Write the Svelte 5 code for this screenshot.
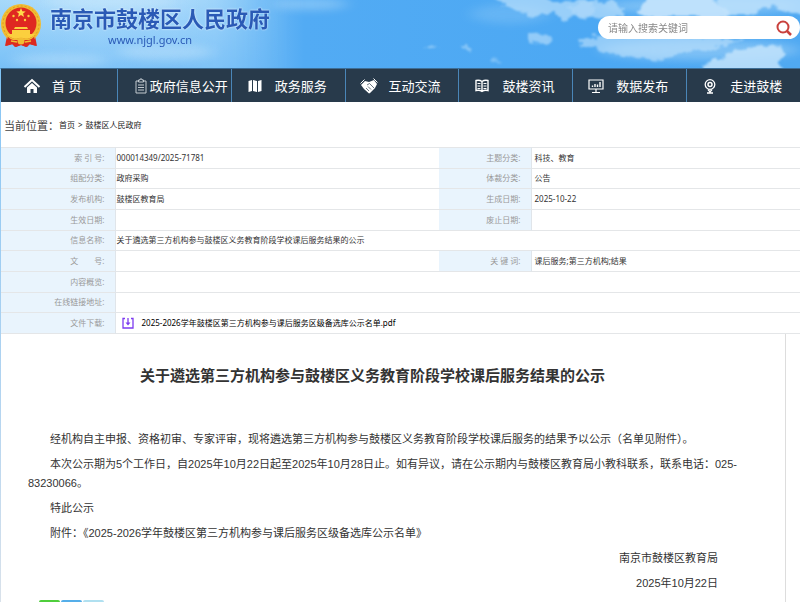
<script>
    let keyword = "";

    const navItems = [
        { icon: "home", label: "首 页" },
        { icon: "clipboard", label: "政府信息公开", wide: true },
        { icon: "map", label: "政务服务" },
        { icon: "hands", label: "互动交流" },
        { icon: "book", label: "鼓楼资讯" },
        { icon: "chart", label: "数据发布" },
        { icon: "pin", label: "走进鼓楼" }
    ];

    const title = "关于遴选第三方机构参与鼓楼区义务教育阶段学校课后服务结果的公示";

    // rows with two cells fill the whole width
    const rows = [
        ["索 引 号:", "000014349/2025-71781", "主题分类:", "科技、教育"],
        ["组配分类:", "政府采购", "体裁分类:", "公告"],
        ["发布机构:", "鼓楼区教育局", "生成日期:", "2025-10-22"],
        ["生效日期:", "", "废止日期:", ""],
        ["信息名称:", title],
        ["文　　号:", "", "关 键 词:", "课后服务;第三方机构;结果"],
        ["内容概览:", ""],
        ["在线链接地址:", ""]
    ];

    const paragraphs = [
        "经机构自主申报、资格初审、专家评审，现将遴选第三方机构参与鼓楼区义务教育阶段学校课后服务的结果予以公示（名单见附件）。",
        "本次公示期为5个工作日，自2025年10月22日起至2025年10月28日止。如有异议，请在公示期内与鼓楼区教育局小教科联系，联系电话：025-83230066。",
        "特此公示",
        "附件：《2025-2026学年鼓楼区第三方机构参与课后服务区级备选库公示名单》"
    ];
</script>

<div class="page" lang="zh-CN">
    <header>
        <svg class="sky" viewBox="0 0 800 68" preserveAspectRatio="none" aria-hidden="true">
            <defs>
                <linearGradient id="sky" x1="0" y1="0" x2="1" y2="0">
                    <stop offset="0" stop-color="#8accf9" />
                    <stop offset=".12" stop-color="#9bd4fa" />
                    <stop offset=".27" stop-color="#8ccbf9" />
                    <stop offset=".38" stop-color="#52abf4" />
                    <stop offset=".75" stop-color="#4ca8f3" />
                    <stop offset="1" stop-color="#50a9f2" />
                </linearGradient>
                <linearGradient id="low" x1="0" y1="0" x2="0" y2="1">
                    <stop offset="0" stop-color="#c4e6fd" stop-opacity=".5" />
                    <stop offset="1" stop-color="#66b5f6" stop-opacity=".5" />
                </linearGradient>
                <linearGradient id="fade" x1="0" y1="0" x2="1" y2="0">
                    <stop offset=".6" stop-color="#fff" />
                    <stop offset="1" stop-color="#000" />
                </linearGradient>
                <mask id="left"><rect width="290" height="68" fill="url(#fade)" /></mask>
                <filter id="soft" x="-30%" y="-60%" width="160%" height="220%"><feGaussianBlur stdDeviation="8 4" /></filter>
                <filter id="cloud" x="-10%" y="-20%" width="120%" height="140%" color-interpolation-filters="sRGB">
                    <feTurbulence type="fractalNoise" baseFrequency=".1 .15" numOctaves="3" seed="8" result="n" />
                    <feComponentTransfer in="n" result="opaque">
                        <feFuncA type="linear" slope="0" intercept="1" />
                    </feComponentTransfer>
                    <feDisplacementMap in="SourceGraphic" in2="opaque" scale="12" xChannelSelector="R" yChannelSelector="G" />
                    <feGaussianBlur stdDeviation="1.200" />
                </filter>
            </defs>
            <rect width="800" height="68" fill="url(#sky)" />
            <rect width="290" height="68" fill="url(#low)" mask="url(#left)" />
            <g fill="#d8effd" opacity=".35" filter="url(#soft)">
                <ellipse cx="110" cy="2" rx="65" ry="8" />
                <ellipse cx="165" cy="52" rx="48" ry="8" />
                <ellipse cx="310" cy="4" rx="38" ry="6" />
                <ellipse cx="60" cy="60" rx="48" ry="6" />
                <ellipse cx="510" cy="14" rx="40" ry="10" opacity=".5" />
                <ellipse cx="700" cy="50" rx="100" ry="10" />
                <ellipse cx="700" cy="6" rx="100" ry="8" />
            </g>
            <g fill="#c2e3fc" filter="url(#cloud)">
                <path d="M492-6h50l8 8 14 0 8-3h12l6 3 24-2 8 10v6l-34 2-14-3-8 6-12-8-26 2-14-5-12-5z" opacity=".65" />
                <path d="M568 4l18-1 12 6-6 7-20-2z" opacity=".35" />
                <path d="M645-8h65l8 14 12 6-6 6h-70l-18-4 8-6z" opacity=".95" />
                <path d="M715-8h91v24l-12-2-10-4-14-3-10 3-12 6h-20l-10-10z" opacity=".8" />
                <path d="M528 34l8-2 10 5 8 4-8 3-18-3z" opacity=".6" />
                <path d="M425 46l8 0 6 4-10 0zM461 45l6 0 6 7-9-2z" opacity=".5" />
                <path d="M576 40l20-4h100l48 4-34 9-26 3-20 8-32-2-24-5-14-4-18-4z" opacity=".6" />
                <path d="M692 74l14-10 18-6 6-6 22-4 8-4 20 2 5 6-5 10v12z" opacity=".85" />
                <path d="M490 60l10 1-4 3-8-1z" opacity=".4" />
            </g>
        </svg>

        <div class="brand">
            <svg class="emblem" viewBox="0 0 42 46" aria-hidden="true">
                <path d="M7 33 5 43l7-2 3 3 6-2 6 2 3-3 7 2-2-10z" fill="#dc2a20" />
                <circle cx="21" cy="21" r="20" fill="#f1bd33" />
                <circle cx="21" cy="21" r="18" fill="none" stroke="#dd9c1e" stroke-width="1" stroke-dasharray="2 2" />
                <circle cx="21" cy="20" r="15.500" fill="#df2821" />
                <path d="m21 5 1.300 3.200 3.400.2-2.600 2.200.9 3.300-3-1.900-3 1.900.9-3.300-2.600-2.200 3.400-.2z" fill="#ffdc4a" />
                <g fill="#fbcf3e">
                    <circle cx="13.500" cy="13" r="1.200" /><circle cx="28.500" cy="13" r="1.200" />
                    <circle cx="17" cy="17" r="1.200" /><circle cx="25" cy="17" r="1.200" />
                    <path d="M15 24h12l1 2H14zM12 27h18v4H12z" />
                    <path d="M7 31h28l-3 4H10z" />
                </g>
                <path d="M8 33 6 43l7-2 3 3 5-2 5 2 3-3 7 2-2-10-8 4H16z" fill="#dc2a20" />
                <path d="M8 33c5 5 8 3 13 3s8 2 13-3M11 38l6 1M31 38l-6 1" fill="none" stroke="#f1bd33" stroke-width="1.500" />
                <circle cx="21" cy="38" r="3.500" fill="#f1bd33" />
            </svg>
            <div class="name">
                <h1>南京市鼓楼区人民政府</h1>
                <a href="#home">www.njgl.gov.cn</a>
            </div>
        </div>

        <form class="search" on:submit|preventDefault>
            <input bind:value={keyword} type="text" placeholder="请输入搜索关键词" aria-label="搜索">
            <button aria-label="搜索">
                <svg viewBox="0 0 16 16" fill="none" stroke="#c9413d" stroke-width="2">
                    <circle cx="7" cy="7" r="5.500" />
                    <path d="m11 11 4 4" stroke-width="2.500" />
                </svg>
            </button>
        </form>
    </header>

    <nav>
        {#each navItems as item}
            <a href="#{item.icon}" class:wide={item.wide}>
                <svg viewBox="0 0 18 18" fill="none" stroke="#fff" aria-hidden="true">
                    {#if item.icon === "home"}
                        <path d="m1.500 10 7.500-7 7.500 7" stroke-width="2" />
                        <path d="M4 10.500 9 6l5 4.500V16h-3.500v-4h-3v4H4z" fill="#fff" stroke="none" />
                    {:else if item.icon === "clipboard"}
                        <path d="M6 4H4v12h10V4h-2" stroke="#c3cad0" />
                        <path d="M6.500 3H8V2h2v1h1.500v2h-5zM6 8h6M6 10.500h6M6 13h6" stroke="#c3cad0" />
                    {:else if item.icon === "map"}
                        <path d="M2.500 4 6 3v11l-3.500 1zM7 3l4 1v11l-4-1zM12 4l3.500-1v11L12 15z" fill="#fff" stroke="none" />
                    {:else if item.icon === "hands"}
                        <path d="m1 8 4-4 4 1 5-2 3 4-2 4-5 5-1 .5L4 12z" fill="#fff" stroke="none" />
                        <path d="m4.500 2.500-4 4M13.500 1.500l4 4" stroke-width="1" />
                        <path d="m7 8 2.500-1.500L14 11M6 11l3 3M8 9.500l3 3" stroke="#283a4b" stroke-width=".7" />
                    {:else if item.icon === "book"}
                        <path d="M9 4.500C7 3 5 3 3 3.500v10c2-.5 4-.5 6 .8 2-1.300 4-1.300 6-.8v-10c-2-.5-4-.5-6 1zV14" stroke-width="1.400" />
                        <path d="M4.500 6.500h3M4.500 9h3M4.500 11.500h3M10.500 6.500h3M10.500 9h3M10.500 11.500h3" />
                    {:else if item.icon === "chart"}
                        <path d="M2 3h14v9H2zM9 12v3M5 15.500h8" stroke-width="1.200" />
                        <path d="M5.500 10V8.500M8 10V7M10.500 10V7.500M13 10V5" stroke-width="1.400" />
                    {:else}
                        <circle cx="9" cy="7.500" r="4.800" stroke-width="1.300" />
                        <circle cx="9" cy="7.500" r="2" stroke-width="1.500" />
                        <path d="M7 12.500 9 15l2-2.500M6 16h6" stroke-width="1.300" />
                    {/if}
                </svg>
                <span>{item.label}</span>
            </a>
        {/each}
    </nav>

    <main>
        <div class="crumbs">
            <span class="here">当前位置：</span>
            <a href="#home">首页</a>
            <span>&gt;</span>
            <a href="#gov">鼓楼区人民政府</a>
        </div>

        <table>
            <colgroup>
                <col class="c-label">
                <col>
                <col class="c-label2">
                <col class="c-value2">
            </colgroup>
            <tbody>
                {#each rows as row}
                    <tr>
                        <th scope="row">{row[0]}</th>
                        {#if row.length > 2}
                            <td>{row[1]}</td>
                            <th scope="row">{row[2]}</th>
                            <td class="second">{row[3]}</td>
                        {:else}
                            <td colspan="3">{row[1]}</td>
                        {/if}
                    </tr>
                {/each}
                <tr>
                    <th scope="row">文件下载:</th>
                    <td colspan="3">
                        <a class="file" href="#pdf">
                            <svg viewBox="0 0 12 12" fill="none" stroke="#7d3cf0" stroke-width="1.300" aria-hidden="true">
                                <path d="M3 1.500H1v9.500h10V1.500H9M6 1v6" />
                                <path d="M3.500 5.500h5L6 8.500z" fill="#7d3cf0" stroke="none" />
                            </svg>
                            2025-2026学年鼓楼区第三方机构参与课后服务区级备选库公示名单.pdf
                        </a>
                    </td>
                </tr>
            </tbody>
        </table>

        <article>
            <h2>{title}</h2>
            {#each paragraphs as text}
                <p>{text}</p>
            {/each}
            <p class="sign">南京市鼓楼区教育局</p>
            <p class="sign">2025年10月22日</p>
            <div class="share">
                <i class="green"></i>
                <i class="blue"></i>
                <i class="pale"></i>
            </div>
        </article>
    </main>
</div>

<style>
    :global(body) {
        background: #fff;
    }

    .page {
        min-height: 100vh;
        font-family: "Noto Sans", "Noto Sans CJK SC", sans-serif;
        font-size: 8px;
        color: #333;
    }

    a {
        color: inherit;
        text-decoration: none;
    }

    header {
        position: relative;
        display: flex;
        justify-content: space-between;
        height: 68px;
    }

    .sky {
        position: absolute;
        inset: 0;
        width: 100%;
        height: 100%;
    }

    .brand {
        position: relative;
        display: flex;
        gap: 8px;
        padding-top: 3px;
    }

    .emblem {
        width: 42px;
        height: 46px;
    }

    .name {
        display: flex;
        flex-direction: column;
        align-items: center;
        color: #2a5ab6;
    }

    h1 {
        margin: 0;
        font-size: 22px;
        line-height: 30px;
        font-weight: 700;
        text-shadow: 0 0 2px #fff;
    }

    .name a {
        margin-left: -20px;
        font-size: 11px;
        line-height: 14px;
    }

    .search {
        position: relative;
        display: flex;
        align-items: center;
        box-sizing: border-box;
        width: 202px;
        height: 23px;
        margin-top: 16px;
        padding: 0 8px 0 10px;
        border-radius: 12px;
        background: #fff;
    }

    .search input {
        flex: 1;
        min-width: 0;
        padding: 0;
        border: 0;
        outline: 0;
        background: none;
        font: 10px "Noto Sans CJK SC", sans-serif;
    }

    .search input::placeholder {
        color: #888;
    }

    .search button {
        display: flex;
        padding: 0;
        border: 0;
        background: none;
    }

    .search svg {
        width: 16px;
        height: 16px;
    }

    nav {
        display: grid;
        grid-template-columns: 117fr repeat(5, 114fr) 113fr;
        box-sizing: border-box;
        height: 34px;
        border-top: 1px solid #3c6d96;
        border-left: 1px solid #7fc3f5;
        background: #283a4b;
        color: #fff;
        font-size: 13px;
    }

    nav a {
        display: flex;
        align-items: center;
        gap: 11px;
        padding-left: 14px;
        border-right: 1px solid #4a86b8;
        white-space: nowrap;
    }

    nav a:first-child {
        padding-left: 22px;
    }

    nav a:last-child {
        border-right: 0;
    }

    nav a.wide {
        gap: 0;
    }

    nav svg {
        flex: none;
        width: 18px;
        height: 18px;
    }

    main {
        border-left: 1px solid;
        border-image: linear-gradient(#8ac6f4, #b5d5f0 60%, #dde3ea) 1;
    }

    .crumbs {
        display: flex;
        align-items: center;
        gap: 3px;
        height: 45px;
        padding-left: 3px;
        color: #222;
    }

    .here {
        margin-right: -3px;
        font-size: 11px;
        color: #444;
    }

    table {
        width: 100%;
        height: 187px;
        table-layout: fixed;
        border-collapse: collapse;
        line-height: 12px;
    }

    .c-label {
        width: 114px;
    }

    .c-label2 {
        width: 92px;
    }

    .c-value2 {
        width: 269px;
    }

    tr {
        border-top: 1px solid #e4e6e8;
        border-bottom: 1px solid #e4e6e8;
    }

    th {
        padding: 0 10px 0 0;
        border-right: 1px solid #e0e5ea;
        background: #e9f4fd;
        color: #999;
        font-weight: 400;
        text-align: right;
    }

    td {
        padding: 0 0 0 1px;
    }

    td.second {
        padding-left: 3px;
    }

    .file {
        display: flex;
        align-items: center;
        gap: 8px;
        padding-left: 5px;
        color: #000;
    }

    .file svg {
        width: 12px;
        height: 12px;
    }

    article {
        margin-right: 14px;
        padding: 31px 46px 0 27px;
        border-right: 1px solid #ddd;
        font-family: "Liberation Sans", "Noto Sans CJK SC", sans-serif;
        font-size: 11px;
        line-height: 19px;
    }

    h2 {
        margin: 0 0 43px;
        padding-right: 22px;
        font-size: 15px;
        line-height: 22px;
        text-align: center;
    }

    p {
        margin: 0 0 6px;
        text-indent: 2em;
    }

    p.sign {
        padding-right: 21px;
        text-align: right;
    }

    .share {
        display: flex;
        gap: 1px;
        padding: 1px 0 0 11px;
    }

    .share i {
        width: 21px;
        height: 20px;
        border-radius: 2px;
    }

    .green {
        background: #4fce3c;
    }

    .blue {
        background: #55aee9;
    }

    .pale {
        background: #b0e0f0;
    }
</style>
